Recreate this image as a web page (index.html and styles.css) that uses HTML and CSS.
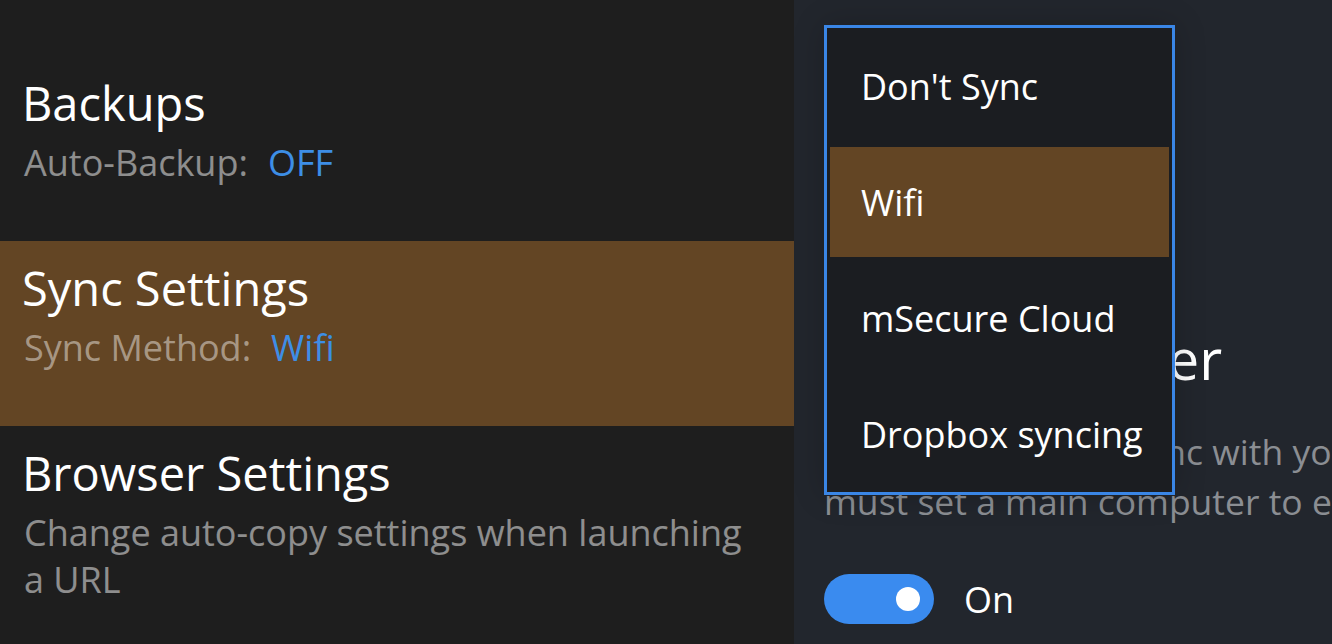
FILE: index.html
```html
<!DOCTYPE html>
<html lang="en">
<head>
<meta charset="utf-8">
<title>Settings</title>
<link rel="stylesheet" href="styles.css">
</head>
<body>
<div class="app">
  <nav class="menu">
    <div class="menu-list">
      <div class="row">
        <div class="title">Security</div>
        <div class="sub">Lock type (App pin)</div>
      </div>
      <div class="row">
        <div class="title">Backups</div>
        <div class="sub">Auto-Backup:<span class="val">OFF</span></div>
      </div>
      <div class="row row-active">
        <div class="title">Sync Settings</div>
        <div class="sub">Sync Method:<span class="val">Wifi</span></div>
      </div>
      <div class="row">
        <div class="title">Browser Settings</div>
        <div class="sub">Change auto-copy settings when launching a URL</div>
      </div>
    </div>
  </nav>
  <main class="detail">
    <div class="detail-body">
      <h2 class="heading">Sync Computer</h2>
      <p class="para">To start using Wifi sync with your other devices, you<br>must set a main computer to enable Wifi syncing.</p>
      <div class="toggle-row">
        <div class="toggle"><span class="knob"></span></div>
        <span class="toggle-label">On</span>
      </div>
    </div>
    <ul class="dropdown">
      <li class="opt">Don't Sync</li>
      <li class="opt opt-selected">Wifi</li>
      <li class="opt">mSecure Cloud</li>
      <li class="opt">Dropbox syncing</li>
    </ul>
  </main>
</div>
</body>
</html>
```

FILE: styles.css
```css
* { box-sizing: border-box; }
html, body {
  margin: 0;
  padding: 0;
  width: 1332px;
  height: 644px;
  overflow: hidden;
  background: #22262d;
  font-family: "Open Sans", "Noto Sans", sans-serif;
}
.app {
  display: flex;
  width: 1332px;
  height: 644px;
}
.menu {
  width: 794px;
  flex: none;
  background: #1e1e1e;
  overflow: hidden;
}
.menu-list {
  margin-top: -129px;
  display: flex;
  flex-direction: column;
}
.row {
  min-height: 185px;
  padding: 19px 50px 0 22px;
}
.row-active {
  background: #634524;
}
.title {
  font-size: 47px;
  line-height: 56px;
  color: #ffffff;
  margin-bottom: 8px;
}
.sub {
  font-size: 36px;
  line-height: 47px;
  color: rgba(255, 255, 255, 0.5);
  padding-left: 2px;
}
.row-active .sub { color: rgba(255, 255, 255, 0.45); }
.val {
  color: #3d8ee6;
  margin-left: 20px;
}
.detail {
  flex: 1;
  position: relative;
  overflow: hidden;
}
.detail-body {
  padding: 318px 0 0 30px;
  white-space: nowrap;
}
.heading {
  margin: 0;
  font-weight: 400;
  font-size: 56px;
  line-height: 80px;
  color: #ffffff;
}
.para {
  margin: 28px 0 0;
  font-size: 35.5px;
  line-height: 50px;
  color: #8b8e93;
}
.toggle-row {
  display: flex;
  align-items: center;
  gap: 30px;
  margin-top: 48px;
}
.toggle {
  width: 110px;
  height: 50px;
  border-radius: 25px;
  background: #3a8bef;
  display: flex;
  align-items: center;
  justify-content: flex-end;
  padding-right: 14px;
}
.knob {
  width: 24px;
  height: 24px;
  border-radius: 50%;
  background: #ffffff;
}
.toggle-label {
  font-size: 36px;
  color: #ffffff;
}
.dropdown {
  position: absolute;
  left: 30px;
  top: 25px;
  width: 351px;
  margin: 0;
  padding: 0;
  list-style: none;
  display: flex;
  flex-direction: column;
  background: #1b1d21;
  border: 3px solid #3a86e6;
  box-shadow: 0 0 30px rgba(0, 0, 0, 0.2);
}
.opt {
  height: 110px;
  margin: 3px 3px;
  padding-left: 31px;
  display: flex;
  align-items: center;
  font-size: 36px;
  color: #ffffff;
}
.opt-selected {
  background: #634524;
}
```
